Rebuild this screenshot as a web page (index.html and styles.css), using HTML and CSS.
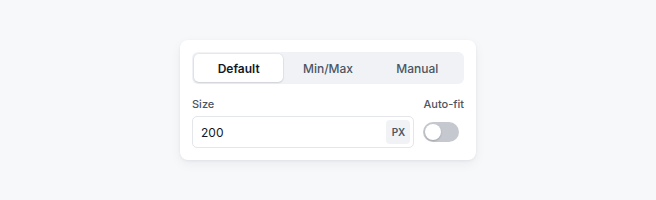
FILE: index.html
```html
<!DOCTYPE html>
<html>
<head>
<meta charset="utf-8">
<link rel="stylesheet" href="styles.css">
</head>
<body>
<div class="stage">
  <div class="card">
    <div class="segmented">
      <button class="seg active">Default</button>
      <button class="seg">Min/Max</button>
      <button class="seg">Manual</button>
    </div>
    <div class="fields">
      <div class="field grow">
        <label class="label">Size</label>
        <div class="input">
          <span class="value">200</span>
          <span class="unit">PX</span>
        </div>
      </div>
      <div class="field">
        <label class="label">Auto-fit</label>
        <div class="toggle-row">
          <span class="toggle"><span class="knob"></span></span>
        </div>
      </div>
    </div>
  </div>
</div>
</body>
</html>
```
FILE: styles.css
```css
html, body {
  margin: 0;
  padding: 0;
  background: #f7f8fa;
  font-family: Inter, "Noto Sans", sans-serif;
}
.stage {
  width: 656px;
  height: 200px;
  display: flex;
  align-items: flex-start;
  justify-content: center;
  padding-top: 40px;
  box-sizing: border-box;
}
.card {
  width: 296px;
  box-sizing: border-box;
  background: #fff;
  border-radius: 8px;
  padding: 12px;
  box-shadow: 0 1px 3px rgba(16, 24, 40, 0.06), 0 4px 12px rgba(16, 24, 40, 0.05);
  display: flex;
  flex-direction: column;
  gap: 12px;
}
.segmented {
  display: grid;
  grid-template-columns: repeat(3, 1fr);
  background: #f0f2f5;
  border-radius: 6px;
  padding: 2px;
  height: 32px;
  box-sizing: border-box;
}
.seg {
  border: 0;
  background: transparent;
  font-family: inherit;
  font-size: 12px;
  font-weight: 500;
  color: #4b5563;
  border-radius: 5px;
  padding: 0;
  cursor: pointer;
}
.seg.active {
  background: #fff;
  color: #111827;
  font-weight: 600;
  box-shadow: 0 1px 2px rgba(16, 24, 40, 0.12), 0 0 0 1px rgba(16, 24, 40, 0.04);
}
.fields {
  display: flex;
  gap: 9px;
}
.field {
  display: flex;
  flex-direction: column;
  gap: 4px;
}
.grow { flex: 1; }
.label {
  font-size: 11px;
  line-height: 16px;
  font-weight: 500;
  color: #4b5563;
}
.input {
  height: 32px;
  box-sizing: border-box;
  border: 1px solid #e3e6ea;
  border-radius: 5px;
  display: flex;
  align-items: center;
  justify-content: space-between;
  padding: 0 3px 0 8px;
}
.value {
  font-size: 12px;
  color: #111827;
}
.unit {
  width: 24px;
  height: 24px;
  border-radius: 4px;
  background: #f0f2f5;
  color: #4b5563;
  font-size: 10px;
  font-weight: 600;
  display: flex;
  align-items: center;
  justify-content: center;
}
.toggle-row {
  height: 32px;
  display: flex;
  align-items: center;
}
.toggle {
  width: 36px;
  height: 20px;
  border-radius: 10px;
  background: #c5c9cf;
  display: flex;
  align-items: center;
  padding: 2px;
  box-sizing: border-box;
}
.knob {
  width: 16px;
  height: 16px;
  border-radius: 50%;
  background: #fff;
  box-shadow: 0 1px 2px rgba(0, 0, 0, 0.2);
}
```
